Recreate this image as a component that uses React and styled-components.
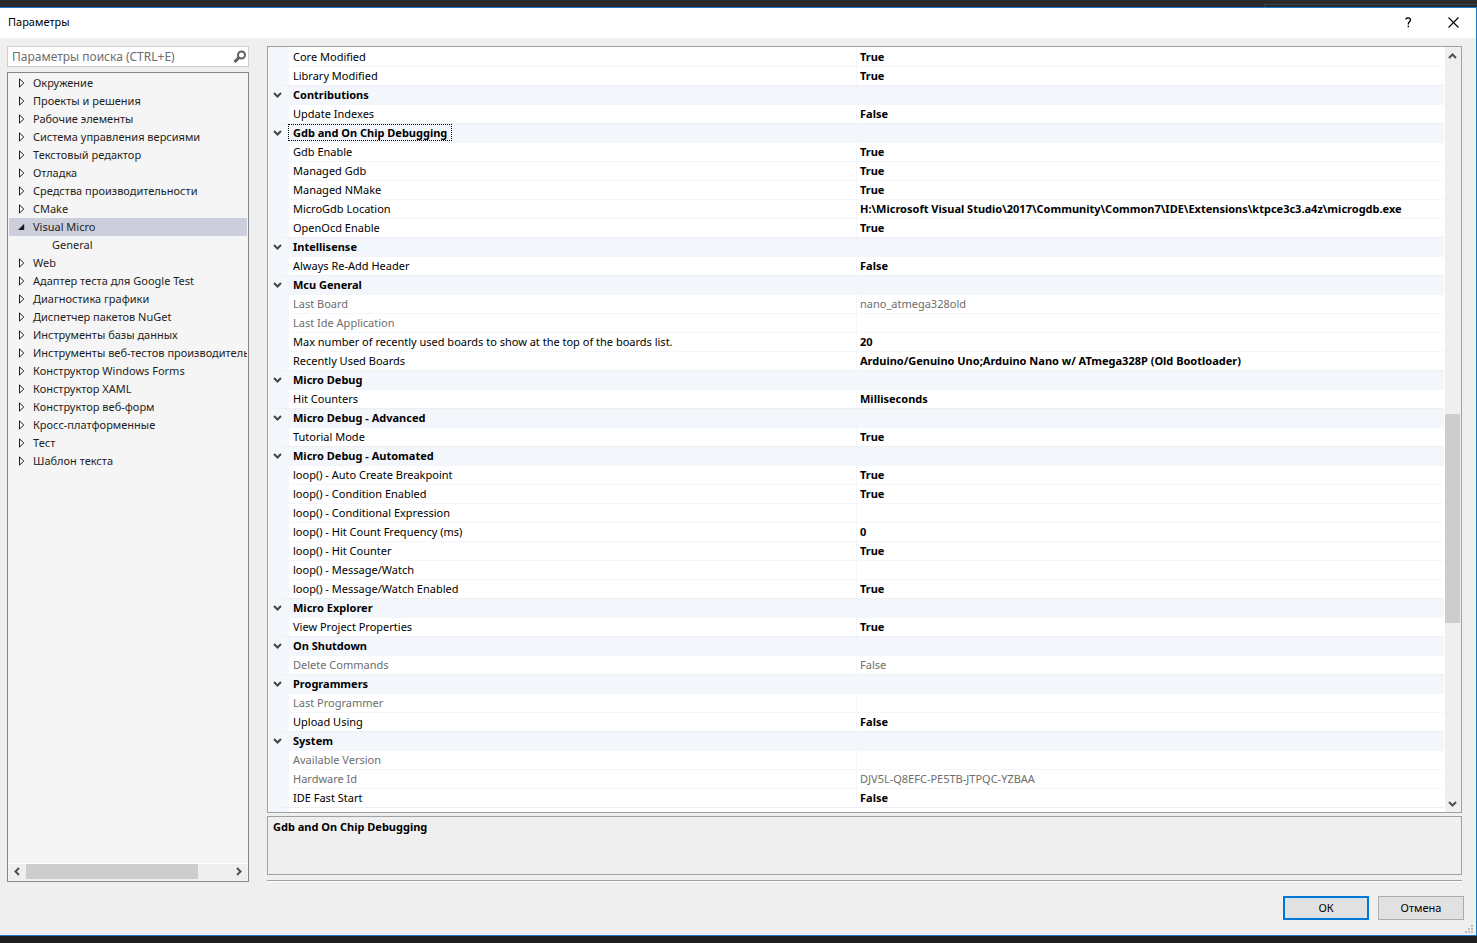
import React, { useState } from 'react';
import styled, { createGlobalStyle } from 'styled-components';

const GlobalStyle = createGlobalStyle`
* {
  box-sizing: border-box;
}
body {
  margin: 0;
  background: #222223;
}
body, button, input {
  font-family: "Noto Sans", "Open Sans", sans-serif;
  font-size: 11px;
  line-height: 18px;
  color: #000;
}
`;

const Screen = styled.div`
display: flex;
flex-direction: column;
min-height: 100vh;
`;

const BackdropTop = styled.div`
display: flex;
justify-content: flex-end;
align-items: flex-end;
height: 7px;
background: #2a2a2c;
`;

const BackdropPane = styled.div`
width: 213px;
height: 3px;
border-top: 1px solid #3f3f46;
border-left: 1px solid #3f3f46;
`;

const BackdropBottom = styled.div`
height: 7px;
background: #1f1f20;
`;

const Dialog = styled.div`
flex: 1;
display: flex;
flex-direction: column;
background: #efefef;
border: 1px solid #1979ca;
border-left: none;
`;

const TitleBar = styled.header`
display: flex;
align-items: center;
height: 30px;
padding: 0 0 2px 8px;
background: #fff;
`;

const Title = styled.h1`
flex: 1;
margin: 0;
font-size: 11px;
font-weight: 400;
`;

const CaptionButton = styled.button`
display: flex;
align-items: center;
justify-content: center;
width: 45px;
height: 28px;
padding: 0;
border: none;
background: transparent;
`;

const Body = styled.main`
flex: 1;
display: flex;
gap: 18px;
padding: 8px 14px 0 7px;
`;

const SidePanel = styled.nav`
display: flex;
flex-direction: column;
gap: 5px;
width: 242px;
flex-shrink: 0;
`;

const SearchBox = styled.label`
display: flex;
align-items: center;
height: 21px;
padding: 0 1px 0 4px;
border: 1px solid #cccedb;
background: #fff;
`;

const SearchInput = styled.input`
flex: 1;
min-width: 0;
padding: 0;
border: none;
outline: none;
background: transparent;
font-size: 12px;
&::placeholder {
  color: #6d6d6d;
  opacity: 1;
}
`;

const TreeBox = styled.div`
flex: 1;
display: flex;
flex-direction: column;
padding: 1px;
border: 1px solid #828790;
background: #f5f5f5;
`;

const Tree = styled.ul`
flex: 1;
margin: 0;
padding: 0;
list-style: none;
overflow: hidden;
`;

const TreeItem = styled.li`
display: flex;
align-items: center;
height: 18px;
padding-left: ${(p) => (p.$nested ? 43 : 8)}px;
white-space: nowrap;
color: #1e1e1e;
background: ${(p) => (p.$selected ? '#cccedb' : 'transparent')};
`;

const Expander = styled.button`
display: flex;
width: 16px;
flex-shrink: 0;
padding: 0;
border: none;
background: transparent;
`;

const HScroll = styled.div`
display: flex;
height: 17px;
padding-bottom: 1px;
border-top: 1px solid #fff;
background: #efefef;
`;

const VScroll = styled.div`
display: flex;
flex-direction: column;
width: 16px;
padding-right: 1px;
flex-shrink: 0;
background: #efefef;
`;

const ScrollArrow = styled.button`
display: flex;
align-items: center;
justify-content: center;
flex: 0 0 17px;
padding: 0;
border: none;
background: transparent;
`;

const ScrollThumb = styled.div`
flex: ${(p) => p.$size} 0 0;
background: #cdcdcd;
`;

const ScrollSpace = styled.div`
flex: ${(p) => p.$size} 0 0;
`;

const Content = styled.section`
flex: 1;
min-width: 0;
display: flex;
flex-direction: column;
`;

const GridFrame = styled.div`
flex: 1;
display: flex;
border: 1px solid #a0a0a0;
background: #fff;
`;

const GridArea = styled.div`
flex: 1;
min-width: 0;
margin-right: 1px;
padding-top: 1px;
background: linear-gradient(to right, #f3f6fb 21px, #fff 21px);
`;

const PropertyTable = styled.table`
width: 100%;
table-layout: fixed;
border-collapse: separate;
border-spacing: 0;
`;

const CategoryCell = styled.th`
height: 19px;
padding: 0 0 2px;
background: #f3f6fb;
text-align: left;
`;

const CategoryLine = styled.div`
display: flex;
align-items: center;
height: 17px;
`;

const CategoryToggle = styled.button`
display: flex;
align-items: center;
width: 20px;
height: 17px;
padding: 0 0 0 5px;
border: none;
background: transparent;
`;

const CategoryName = styled.span`
height: 17px;
padding: 0 4px;
border: 1px dotted ${(p) => (p.$focused ? '#000' : 'transparent')};
line-height: 15px;
font-weight: 700;
`;

const NameCell = styled.th`
height: 19px;
padding: 0 4px;
border-left: 21px solid #f3f6fb;
border-bottom: 1px solid ${(p) => (p.$last ? '#edeff2' : '#f3f6fb')};
text-align: left;
font-weight: 400;
white-space: nowrap;
color: ${(p) => (p.$readOnly ? '#6d6d6d' : '#000')};
`;

const ValueCell = styled.td`
height: 19px;
padding: 0 3px;
border-left: 1px solid #f3f6fb;
border-bottom: 1px solid ${(p) => (p.$last ? '#edeff2' : '#f3f6fb')};
font-weight: ${(p) => (p.$readOnly ? 400 : 700)};
white-space: nowrap;
overflow: hidden;
color: ${(p) => (p.$readOnly ? '#6d6d6d' : '#000')};
`;

const Description = styled.div`
height: 59px;
margin-top: 3px;
padding: 1px 5px;
border: 1px solid #a0a0a0;
font-weight: 700;
`;

const Rule = styled.hr`
width: 100%;
height: 2px;
margin: 5px 0 0;
border: none;
border-top: 1px solid #a0a0a0;
background: #fff;
`;

const Footer = styled.footer`
display: flex;
justify-content: flex-end;
gap: 9px;
padding: 14px 12px 0 0;
`;

const DialogButton = styled.button`
width: 86px;
height: 24px;
padding: 0;
border: ${(p) => (p.$primary ? '2px solid #0078d7' : '1px solid #adadad')};
background: #e1e1e1;
`;

const GripRow = styled.div`
display: flex;
justify-content: flex-end;
align-items: flex-end;
height: 15px;
padding: 0 3px 2px 0;
`;

const treeItems = [
    { name: 'Окружение' },
    { name: 'Проекты и решения' },
    { name: 'Рабочие элементы' },
    { name: 'Система управления версиями' },
    { name: 'Текстовый редактор' },
    { name: 'Отладка' },
    { name: 'Средства производительности' },
    { name: 'CMake' },
    { name: 'Visual Micro', open: true },
    { name: 'General', nested: true },
    { name: 'Web' },
    { name: 'Адаптер теста для Google Test' },
    { name: 'Диагностика графики' },
    { name: 'Диспетчер пакетов NuGet' },
    { name: 'Инструменты базы данных' },
    { name: 'Инструменты веб-тестов производительности' },
    { name: 'Конструктор Windows Forms' },
    { name: 'Конструктор XAML' },
    { name: 'Конструктор веб-форм' },
    { name: 'Кросс-платформенные' },
    { name: 'Тест' },
    { name: 'Шаблон текста' },
];

// [name, value, readOnly]
const groups = [
    { rows: [['Core Modified', 'True'], ['Library Modified', 'True']] },
    { title: 'Contributions', rows: [['Update Indexes', 'False']] },
    {
        title: 'Gdb and On Chip Debugging',
        rows: [
            ['Gdb Enable', 'True'],
            ['Managed Gdb', 'True'],
            ['Managed NMake', 'True'],
            ['MicroGdb Location', 'H:\\Microsoft Visual Studio\\2017\\Community\\Common7\\IDE\\Extensions\\ktpce3c3.a4z\\microgdb.exe'],
            ['OpenOcd Enable', 'True'],
        ],
    },
    { title: 'Intellisense', rows: [['Always Re-Add Header', 'False']] },
    {
        title: 'Mcu General',
        rows: [
            ['Last Board', 'nano_atmega328old', true],
            ['Last Ide Application', '', true],
            ['Max number of recently used boards to show at the top of the boards list.', '20'],
            ['Recently Used Boards', 'Arduino/Genuino Uno;Arduino Nano w/ ATmega328P (Old Bootloader)'],
        ],
    },
    { title: 'Micro Debug', rows: [['Hit Counters', 'Milliseconds']] },
    { title: 'Micro Debug - Advanced', rows: [['Tutorial Mode', 'True']] },
    {
        title: 'Micro Debug - Automated',
        rows: [
            ['loop() - Auto Create Breakpoint', 'True'],
            ['loop() - Condition Enabled', 'True'],
            ['loop() - Conditional Expression', ''],
            ['loop() - Hit Count Frequency (ms)', '0'],
            ['loop() - Hit Counter', 'True'],
            ['loop() - Message/Watch', ''],
            ['loop() - Message/Watch Enabled', 'True'],
        ],
    },
    { title: 'Micro Explorer', rows: [['View Project Properties', 'True']] },
    { title: 'On Shutdown', rows: [['Delete Commands', 'False', true]] },
    { title: 'Programmers', rows: [['Last Programmer', '', true], ['Upload Using', 'False']] },
    {
        title: 'System',
        rows: [
            ['Available Version', '', true],
            ['Hardware Id', 'DJV5L-Q8EFC-PE5TB-JTPQC-YZBAA', true],
            ['IDE Fast Start', 'False'],
        ],
    },
];

const arrowPaths = {
    up: 'M1 7 L4.5 3.5 L8 7',
    down: 'M1 3 L4.5 6.5 L8 3',
    left: 'M6 1 L2.5 4.5 L6 8',
    right: 'M3 1 L6.5 4.5 L3 8',
};

const Chevron = ({ dir, color = '#505050', width = 2 }) => (
    <svg width="9" height="9" viewBox="0 0 9 9" fill="none" stroke={color} strokeWidth={width}>
        <path d={arrowPaths[dir]} />
    </svg>
);

const TreeArrow = ({ open }) => (
    <svg width="9" height="10" viewBox="0 0 9 10">
        {open
            ? <path d="M7.2 1.8 V8 H1 Z" fill="#1e1e1e" />
            : <path d="M2.5 0.9 V9.1 L6.8 5 Z" fill="#fff" stroke="#1e1e1e" />}
    </svg>
);

const SearchIcon = () => (
    <svg width="14" height="14" viewBox="0 0 14 14" fill="none" stroke="#5e5e5e">
        <circle cx="8.5" cy="5" r="3.5" strokeWidth="2" />
        <path d="M6 7.5 L1.5 12" strokeWidth="3" />
    </svg>
);

const CloseIcon = () => (
    <svg width="11" height="11" viewBox="0 0 11 11" stroke="#000" strokeWidth="1.1">
        <path d="M0.5 0.5 L10.5 10.5 M10.5 0.5 L0.5 10.5" />
    </svg>
);

const HelpIcon = () => (
    <svg width="7" height="11" viewBox="0 0 7 11" fill="none" stroke="#000" strokeWidth="1.4">
        <path d="M1 2.6 V1.8 Q1.4 0.9 3.3 0.9 Q5.4 0.9 5.4 2.8 Q5.4 4 4.4 4.8 Q3.3 5.6 3.3 7.4" />
        <path d="M3.3 8.8 V10.3" />
    </svg>
);

const Grip = () => (
    <svg width="8" height="8" viewBox="0 0 8 8" fill="#bfbfbf">
        <path d="M6 0h2v2h-2z M3 3h2v2h-2z M6 3h2v2h-2z M0 6h2v2h-2z M3 6h2v2h-2z M6 6h2v2h-2z" />
    </svg>
);

const PropertyGroup = ({ group, focused, onFocus }) => (
    <tbody>
        {group.title && (
            <tr onClick={() => onFocus(group.title)}>
                <CategoryCell colSpan={2} scope="rowgroup">
                    <CategoryLine>
                        <CategoryToggle aria-label={group.title}>
                            <Chevron dir="down" color="#444" />
                        </CategoryToggle>
                        <CategoryName $focused={focused}>{group.title}</CategoryName>
                    </CategoryLine>
                </CategoryCell>
            </tr>
        )}
        {group.rows.map(([name, value, readOnly], i) => {
            const last = i === group.rows.length - 1;
            return (
                <tr key={name}>
                    <NameCell scope="row" $readOnly={readOnly} $last={last}>{name}</NameCell>
                    <ValueCell $readOnly={readOnly} $last={last}>{value}</ValueCell>
                </tr>
            );
        })}
    </tbody>
);

const App = () => {
    const [selected, setSelected] = useState('Visual Micro');
    const [category, setCategory] = useState('Gdb and On Chip Debugging');

    return (
        <Screen>
            <GlobalStyle />
            <BackdropTop><BackdropPane /></BackdropTop>
            <Dialog role="dialog" aria-label="Параметры">
                <TitleBar>
                    <Title>Параметры</Title>
                    <CaptionButton aria-label="Справка"><HelpIcon /></CaptionButton>
                    <CaptionButton aria-label="Закрыть"><CloseIcon /></CaptionButton>
                </TitleBar>
                <Body>
                    <SidePanel>
                        <SearchBox>
                            <SearchInput type="text" aria-label="Параметры поиска" placeholder="Параметры поиска (CTRL+E)" />
                            <SearchIcon />
                        </SearchBox>
                        <TreeBox>
                            <Tree role="tree">
                                {treeItems.map((item) => (
                                    <TreeItem
                                        key={item.name}
                                        role="treeitem"
                                        aria-selected={selected === item.name}
                                        $nested={item.nested}
                                        $selected={selected === item.name}
                                        onClick={() => setSelected(item.name)}
                                    >
                                        {!item.nested && (
                                            <Expander aria-label={item.name}><TreeArrow open={item.open} /></Expander>
                                        )}
                                        {item.name}
                                    </TreeItem>
                                ))}
                            </Tree>
                            <HScroll>
                                <ScrollArrow aria-label="Влево"><Chevron dir="left" /></ScrollArrow>
                                <ScrollThumb $size={172} />
                                <ScrollSpace $size={32} />
                                <ScrollArrow aria-label="Вправо"><Chevron dir="right" /></ScrollArrow>
                            </HScroll>
                        </TreeBox>
                    </SidePanel>
                    <Content>
                        <GridFrame>
                            <GridArea>
                                <PropertyTable>
                                    {groups.map((group) => (
                                        <PropertyGroup
                                            key={group.title || 'top'}
                                            group={group}
                                            focused={group.title === category}
                                            onFocus={setCategory}
                                        />
                                    ))}
                                </PropertyTable>
                            </GridArea>
                            <VScroll>
                                <ScrollArrow aria-label="Вверх"><Chevron dir="up" /></ScrollArrow>
                                <ScrollSpace $size={350} />
                                <ScrollThumb $size={209} />
                                <ScrollSpace $size={172} />
                                <ScrollArrow aria-label="Вниз"><Chevron dir="down" /></ScrollArrow>
                            </VScroll>
                        </GridFrame>
                        <Description>{category}</Description>
                        <Rule />
                    </Content>
                </Body>
                <Footer>
                    <DialogButton $primary>ОК</DialogButton>
                    <DialogButton>Отмена</DialogButton>
                </Footer>
                <GripRow><Grip /></GripRow>
            </Dialog>
            <BackdropBottom />
        </Screen>
    );
};

export default App;
